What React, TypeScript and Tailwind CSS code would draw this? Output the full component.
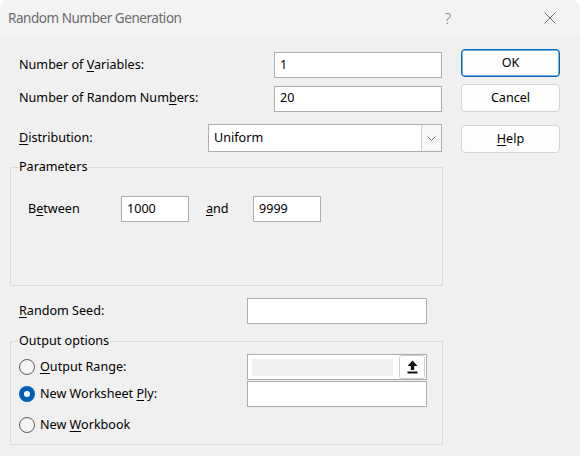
import type { ReactNode } from "react";

const FONT = "font-['Noto_Sans','Open_Sans',sans-serif]";

function TextBox({ value, className = "" }: { value?: string; className?: string }) {
  return (
    <div
      className={`flex items-center h-[26px] bg-white border border-[#adadad] pl-[5px] text-[12.6px] text-black ${className}`}
    >
      {value}
    </div>
  );
}

function Button({ children, primary }: { children: ReactNode; primary?: boolean }) {
  return (
    <button
      className={`flex items-center justify-center w-[99px] h-[28px] rounded-[4px] bg-[#fdfdfd] text-[12.6px] text-black ${
        primary ? "border border-[#0067c0] shadow-[inset_0_0_0_0.5px_#0067c0]" : "border border-[#d4d4d4]"
      }`}
    >
      {children}
    </button>
  );
}

function Radio({ checked }: { checked?: boolean }) {
  return checked ? (
    <span className="flex items-center justify-center w-[16px] h-[16px] rounded-full bg-[#005fb8]">
      <span className="w-[6px] h-[6px] rounded-full bg-white" />
    </span>
  ) : (
    <span className="w-[16px] h-[16px] rounded-full border border-[#5c5c5c] bg-[#f5f5f5]" />
  );
}

export default function App() {
  return (
    <div className={`w-[580px] h-[456px] bg-white ${FONT} overflow-hidden`}>
      <div className="h-full rounded-t-[8px] overflow-hidden bg-[#f0f0f0] flex flex-col">
        {/* title bar */}
        <div className="h-[36px] shrink-0 bg-[#f3f3f3] flex items-center pl-[8px]">
          <span className="text-[13.5px] tracking-[-0.45px] text-[#6b6b6b]">Random Number Generation</span>
          <span className="ml-auto mr-[93px] text-[15px] text-[#7a7a7a] font-light">?</span>
          <svg width="12" height="12" viewBox="0 0 12 12" className="mr-[24px]">
            <path d="M0.5 0.5 L11.5 11.5 M11.5 0.5 L0.5 11.5" stroke="#6e6e6e" strokeWidth="1" />
          </svg>
        </div>

        {/* body */}
        <div className="flex text-[12.6px] text-black">
          <div className="w-[443px] pl-[10px] pt-[16px]">
            <div className="flex items-center pl-[9px]">
              <span className="w-[255px]">
                Number of <u className="underline-offset-2">V</u>ariables:
              </span>
              <TextBox value="1" className="w-[168px]" />
            </div>
            <div className="flex items-center pl-[9px] mt-[8px] h-[25px]">
              <span className="w-[255px]">
                Number of Random Num<u className="underline-offset-2">b</u>ers:
              </span>
              <TextBox value="20" className="w-[168px] h-[25px]" />
            </div>
            <div className="flex items-center pl-[9px] mt-[13px]">
              <span className="w-[189px]">
                <u className="underline-offset-2">D</u>istribution:
              </span>
              <div className="flex w-[234px] h-[28px] bg-white border border-[#adadad]">
                <span className="flex-1 flex items-center pl-[5px]">Uniform</span>
                <span className="w-[20px] flex items-center justify-center border-l border-[#cfcfcf] bg-[#f8f8f8]">
                  <svg width="9" height="5" viewBox="0 0 9 5">
                    <path d="M0.5 0.5 L4.5 4.5 L8.5 0.5" fill="none" stroke="#707070" strokeWidth="1" />
                  </svg>
                </span>
              </div>
            </div>

            <fieldset className="mt-[7px] h-[127px] border border-[#dcdcdc]">
              <legend className="ml-[7px] px-[1px] leading-[16px]">Parameters</legend>
              <div className="flex items-center mt-[21px]">
                <span className="ml-[17px] w-[93px]">
                  B<u className="underline-offset-2">e</u>tween
                </span>
                <TextBox value="1000" className="w-[68px]" />
                <span className="ml-[17px] w-[47px]">
                  <u className="underline-offset-2">a</u>nd
                </span>
                <TextBox value="9999" className="w-[68px]" />
              </div>
            </fieldset>

            <div className="flex items-center pl-[9px] mt-[12px]">
              <span className="w-[228px]">
                <u className="underline-offset-2">R</u>andom Seed:
              </span>
              <TextBox className="w-[180px]" />
            </div>

            <fieldset className="mt-[9px] h-[112px] border border-[#dcdcdc]">
              <legend className="ml-[7px] px-[1px] leading-[16px]">Output options</legend>
              <div className="flex items-center mt-[5px] h-[26px]">
                <div className="flex items-center gap-[5px] ml-[8px] w-[228px]">
                  <Radio />
                  <span>
                    <u className="underline-offset-2">O</u>utput Range:
                  </span>
                </div>
                <div className="flex items-center w-[180px] h-[26px] bg-white border border-[#adadad] pl-[4px] pr-[1px]">
                  <div className="flex-1 h-[17px] bg-[#f0f0f0]" />
                  <div className="ml-[6px] w-[26px] h-[24px] rounded-[3px] border border-[#d0d0d0] bg-white flex items-center justify-center">
                    <svg width="11" height="14" viewBox="0 0 11 14">
                      <path d="M5.5 0.5 L10.5 6 L7.2 6 L7.2 10 L3.8 10 L3.8 6 L0.5 6 Z" fill="#111" />
                      <rect x="0.5" y="11.5" width="10" height="2" fill="#111" />
                    </svg>
                  </div>
                </div>
              </div>
              <div className="flex items-center mt-[1px] h-[26px]">
                <div className="flex items-center gap-[5px] ml-[8px] w-[228px]">
                  <Radio checked />
                  <span>
                    New Worksheet <u className="underline-offset-2">P</u>ly:
                  </span>
                </div>
                <TextBox className="w-[180px]" />
              </div>
              <div className="flex items-center mt-[5px] h-[26px]">
                <div className="flex items-center gap-[5px] ml-[8px]">
                  <Radio />
                  <span>
                    New <u className="underline-offset-2">W</u>orkbook
                  </span>
                </div>
              </div>
            </fieldset>
          </div>

          <div className="ml-[18px] pt-[13px] flex flex-col">
            <Button primary>OK</Button>
            <div className="mt-[7px]">
              <Button>Cancel</Button>
            </div>
            <div className="mt-[13px]">
              <Button>
                <span>
                  <u className="underline-offset-2">H</u>elp
                </span>
              </Button>
            </div>
          </div>
        </div>
      </div>
    </div>
  );
}
